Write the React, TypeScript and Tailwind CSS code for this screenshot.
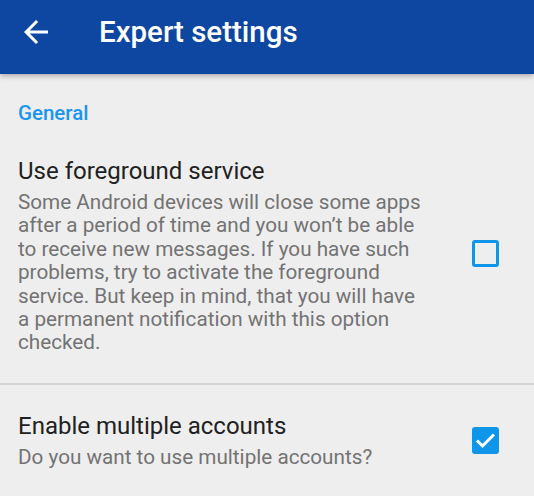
import { useState } from 'react';

function BackArrow() {
  return (
    <svg width="36" height="36" viewBox="0 0 24 24" fill="#ffffff">
      <path d="M20 11H7.83l5.59-5.59L12 4l-8 8 8 8 1.41-1.41L7.83 13H20v-2z" />
    </svg>
  );
}

function Checkbox({ checked, onToggle }: { checked: boolean; onToggle: () => void }) {
  return (
    <button
      onClick={onToggle}
      className={
        checked
          ? 'w-[27px] h-[27px] rounded-[3px] bg-[#0f95ea] flex items-center justify-center shrink-0'
          : 'w-[27px] h-[27px] rounded-[3px] border-[3px] border-[#0f95ea] shrink-0'
      }
    >
      {checked && (
        <svg width="27" height="27" viewBox="0 0 27 27" fill="none">
          <path d="M5 13.5l5.5 5.5L22 7.5" stroke="#ffffff" strokeWidth="3" />
        </svg>
      )}
    </button>
  );
}

export default function App() {
  const [foreground, setForeground] = useState(false);
  const [multiple, setMultiple] = useState(true);

  return (
    <div className="w-[534px] h-[496px] bg-[#eeeeee] overflow-hidden" style={{ fontFamily: 'Roboto, sans-serif' }}>
      {/* Toolbar */}
      <div className="relative h-[74px] bg-[#0e47a1] flex items-start pt-[14px] pl-[18px] shadow-[0_2px_5px_rgba(0,0,0,0.28)]">
        <BackArrow />
        <h1 className="ml-[45px] text-[29.5px] leading-[36px] font-medium text-white">Expert settings</h1>
      </div>

      <div className="pt-[27px]">
        <div className="px-[18px] text-[20.5px] leading-[24px] font-medium text-[#1a96ef]">General</div>

        <div className="flex items-center px-[18px] pt-[32px] pb-[28px]">
          <div className="flex-1">
            <div className="text-[24px] leading-[28px] text-[#212121]">Use foreground service</div>
            <p className="mt-[6px] text-[20.7px] leading-[23.4px] text-[#737373] w-[410px]">
              Some Android devices will close some apps after a period of time and you won’t be able to receive new messages. If you have such problems, try to activate the foreground service. But keep in mind, that you will have a permanent notification with this option checked.
            </p>
          </div>
          <div className="mr-[17px]">
            <Checkbox checked={foreground} onToggle={() => setForeground(!foreground)} />
          </div>
        </div>

        <div className="h-[2px] bg-[#d2d2d2]" />

        <div className="flex items-center px-[18px] pt-[27px]">
          <div className="flex-1">
            <div className="text-[24px] leading-[28px] text-[#212121]">Enable multiple accounts</div>
            <p className="mt-[6px] text-[20.7px] leading-[23.4px] text-[#737373]">Do you want to use multiple accounts?</p>
          </div>
          <div className="mr-[17px]">
            <Checkbox checked={multiple} onToggle={() => setMultiple(!multiple)} />
          </div>
        </div>
      </div>
    </div>
  );
}
